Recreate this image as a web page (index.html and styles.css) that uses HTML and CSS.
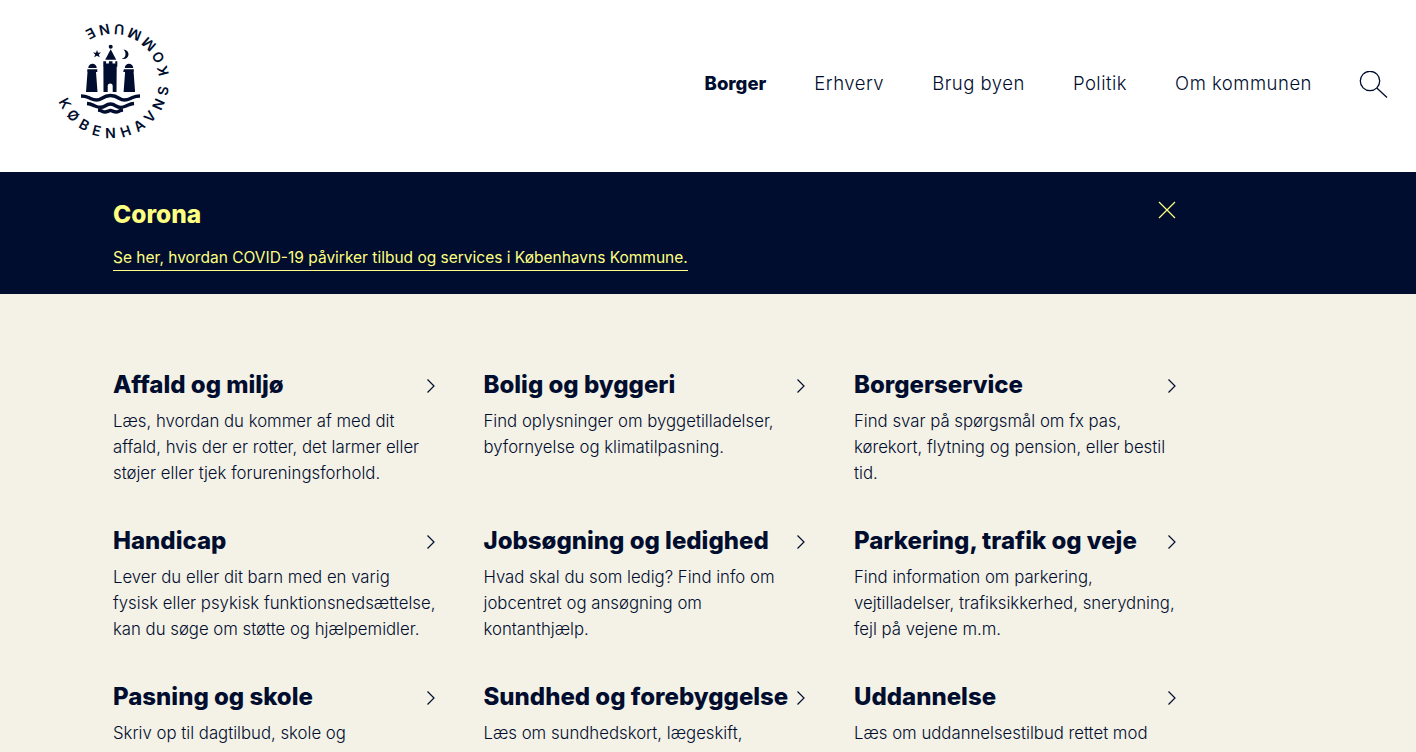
FILE: index.html
```html
<!DOCTYPE html>
<html lang="da">
<head>
<meta charset="utf-8">
<title>Københavns Kommune</title>
<link rel="stylesheet" href="styles.css">
</head>
<body>
<header class="site-header">
  <a class="logo" href="#" aria-label="Københavns Kommune">
    <svg class="logo-svg" viewBox="47 17 130 130" width="130" height="130">
      <defs><path id="ring" d="M58.800 101.400 A57 57 0 1 0 79.300 34.300"/></defs>
      <text class="logo-text"><textPath href="#ring" startOffset="0">KØBENHAVNS KOMMUNE</textPath></text>
      <circle cx="110.700" cy="46.700" r="2"/>
      <path d="M97 50l1 2.800 3-.3-2.200 2 1 2.800-2.800-1.500-2.800 1.500 1-2.800-2.200-2 3 .3z"/>
      <path d="M123.500 49.500c3 .3 5 2.300 5 4.800 0 3.200-3.200 5.500-6.800 4.500 2.300-.3 3.800-2.200 3.800-4.500 0-2-.8-3.800-2-4.800z"/>
      <path d="M110.700 49.300l5.500 10.400h-11z"/>
      <path d="M103.300 61.300h2.800v2.300h2.800v-2.300h3.600v2.300h2.800v-2.300h2v5.500h-.6l-.2 25.200h-3.800v-6a2.500 2.500 0 0 0-5 0v6h-4.200l-.1-25.200h-.1z"/>
      <path d="M88.300 68a4.200 4.200 0 0 1 8.400 0zM87.300 69.300h10v2.700h-1.300l1.500 20h-11.500l1.500-20h-.2z"/>
      <path d="M124.800 68a4.200 4.200 0 0 1 8.400 0zM123.800 69.300h10v2.700h-.2l1.500 20h-11.500l1.500-20h-1.800z"/>
      <path class="wave" d="M81 96c5 0 5 .5 9.500 2.500 4.500 2 8 2 11 0s5.500-3 9-3 6 1 9 3 6.500 2 11 0 4.500-2.500 9.500-2.500"/>
      <path class="wave" d="M87 103.500c4 .3 4.500 1 8 2.500 4.500 2 7 2 10 0s3.500-2 5.500-2 2.500 0 5.500 2 5.500 2 10 0 4-2.200 8-2.500"/>
      <path class="wave" d="M98 110c3 .3 3 .8 5 1.700 3 1.300 5.500-1 7.500-1.300 2 .3 4.500 2.600 7.500 1.300 2-.9 2-1.400 5-1.700"/>
    </svg>
  </a>
  <nav class="main-nav">
    <a class="nav-link nav-active" href="#">Borger</a>
    <a class="nav-link" href="#">Erhverv</a>
    <a class="nav-link" href="#">Brug byen</a>
    <a class="nav-link" href="#">Politik</a>
    <a class="nav-link" href="#">Om kommunen</a>
    <a class="search" href="#" aria-label="Søg">
      <svg viewBox="0 0 30 30" width="30" height="30" class="line-icon"><circle cx="12" cy="10" r="9.700"/><path d="M18.800 17L29 26.500"/></svg>
    </a>
  </nav>
</header>

<section class="banner">
  <div class="banner-inner">
    <div>
      <h2 class="banner-title">Corona</h2>
      <a class="banner-link" href="#">Se her, hvordan COVID-19 påvirker tilbud og services i Københavns Kommune.</a>
    </div>
    <svg class="banner-close" viewBox="0 0 20 20" width="20" height="20"><path d="M2 2L18 18M18 2L2 18"/></svg>
  </div>
</section>

<main class="content">
  <div class="grid">
    <a class="card" href="#"><div class="card-head"><h3>Affald og miljø</h3><svg class="chev" viewBox="0 0 10 16" width="10" height="16"><path d="M1.500 1.500l6.500 6.500-6.500 6.500"/></svg></div><p>Læs, hvordan du kommer af med dit affald, hvis der er rotter, det larmer eller støjer eller tjek forureningsforhold.</p></a>
    <a class="card" href="#"><div class="card-head"><h3>Bolig og byggeri</h3><svg class="chev" viewBox="0 0 10 16" width="10" height="16"><path d="M1.500 1.500l6.500 6.500-6.500 6.500"/></svg></div><p>Find oplysninger om byggetilladelser, byfornyelse og klimatilpasning.</p></a>
    <a class="card" href="#"><div class="card-head"><h3>Borgerservice</h3><svg class="chev" viewBox="0 0 10 16" width="10" height="16"><path d="M1.500 1.500l6.500 6.500-6.500 6.500"/></svg></div><p>Find svar på spørgsmål om fx pas, kørekort, flytning og pension, eller bestil tid.</p></a>
    <a class="card" href="#"><div class="card-head"><h3>Handicap</h3><svg class="chev" viewBox="0 0 10 16" width="10" height="16"><path d="M1.500 1.500l6.500 6.500-6.500 6.500"/></svg></div><p>Lever du eller dit barn med en varig fysisk eller psykisk funktionsnedsættelse, kan du søge om støtte og hjælpemidler.</p></a>
    <a class="card" href="#"><div class="card-head"><h3>Jobsøgning og ledighed</h3><svg class="chev" viewBox="0 0 10 16" width="10" height="16"><path d="M1.500 1.500l6.500 6.500-6.500 6.500"/></svg></div><p>Hvad skal du som ledig? Find info om jobcentret og ansøgning om kontanthjælp.</p></a>
    <a class="card" href="#"><div class="card-head"><h3>Parkering, trafik og veje</h3><svg class="chev" viewBox="0 0 10 16" width="10" height="16"><path d="M1.500 1.500l6.500 6.500-6.500 6.500"/></svg></div><p>Find information om parkering, vejtilladelser, trafiksikkerhed, snerydning, fejl på vejene m.m.</p></a>
    <a class="card" href="#"><div class="card-head"><h3>Pasning og skole</h3><svg class="chev" viewBox="0 0 10 16" width="10" height="16"><path d="M1.500 1.500l6.500 6.500-6.500 6.500"/></svg></div><p>Skriv op til dagtilbud, skole og</p></a>
    <a class="card" href="#"><div class="card-head"><h3>Sundhed og forebyggelse</h3><svg class="chev" viewBox="0 0 10 16" width="10" height="16"><path d="M1.500 1.500l6.500 6.500-6.500 6.500"/></svg></div><p>Læs om sundhedskort, lægeskift,</p></a>
    <a class="card" href="#"><div class="card-head"><h3>Uddannelse</h3><svg class="chev" viewBox="0 0 10 16" width="10" height="16"><path d="M1.500 1.500l6.500 6.500-6.500 6.500"/></svg></div><p>Læs om uddannelsestilbud rettet mod</p></a>
  </div>
</main>
</body>
</html>
```

FILE: styles.css
```css
* { box-sizing: border-box; }
html, body { margin: 0; height: 100%; overflow: hidden; }
body { font-family: "Inter", "Liberation Sans", sans-serif; color: #000d2e; background: #f4f1e7; }
a { color: inherit; text-decoration: none; }

.site-header { height: 172px; background: #fff; display: flex; align-items: center; justify-content: space-between; padding: 0 28px 0 47px; }
.logo { display: block; height: 130px; margin-top: -8px; }
.logo-svg { display: block; fill: #000d2e; }
.logo-text { font-family: "Inter", sans-serif; font-weight: 600; font-size: 14px; letter-spacing: 6px; word-spacing: -3px; }
.wave { fill: none; stroke: #000d2e; stroke-width: 3.4; }
.main-nav { display: flex; align-items: center; gap: 48px; }
.nav-link { font-size: 18.5px; line-height: 24px; margin-top: -6px; font-weight: 300; letter-spacing: 0.5px; }
.nav-active { font-weight: 800; letter-spacing: 0; }
.search { display: block; height: 30px; margin-left: -2px; }
.line-icon { display: block; fill: none; stroke: #000d2e; stroke-width: 1.3; }

.banner { height: 122px; background: #000d2e; color: #ffff80; padding: 0 113px; }
.banner-inner { width: 1064px; display: flex; justify-content: space-between; align-items: flex-start; padding-top: 27px; }
.banner-title { margin: 0 0 16px; font-size: 24.5px; line-height: 30px; font-weight: 800; }
.banner-link { display: inline-block; font-size: 15.5px; line-height: 25px; border-bottom: 1px solid #ffff80; }
.banner-close { margin-top: 1px; fill: none; stroke: #ffff80; stroke-width: 1.2; }

.content { padding: 76px 113px 0; }
.grid { display: grid; grid-template-columns: repeat(3, 323.5px); column-gap: 47px; grid-auto-rows: 156px; }
.card { display: block; }
.card-head { display: flex; align-items: center; justify-content: space-between; height: 30px; }
.card-head h3 { margin: 0; font-size: 24px; line-height: 30px; font-weight: 800; white-space: nowrap; }
.chev { flex: none; margin-top: 2px; margin-right: 1px; fill: none; stroke: #000d2e; stroke-width: 1.2; }
.card p { margin: 8px 0 0; font-size: 16.75px; line-height: 26px; font-weight: 300; }
```
